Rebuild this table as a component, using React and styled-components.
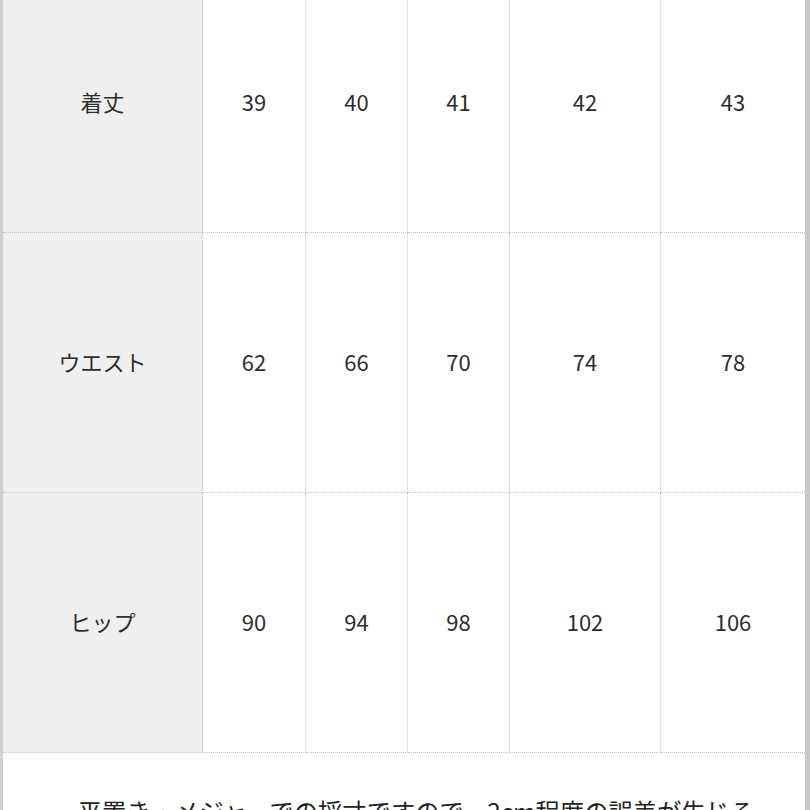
import React from "react";
import styled, { createGlobalStyle } from "styled-components";

const Global = createGlobalStyle`
  html, body { margin: 0; padding: 0; background: #fff; overflow: hidden; }
  body { font-family: "Noto Sans CJK JP", "Noto Sans", sans-serif; color: #333; }
`;

const Frame = styled.div`
  width: 810px;
  height: 810px;
  box-sizing: border-box;
  border-left: 3px solid #d0d0d0;
  border-right: 5px solid #c8c8c8;
  overflow: hidden;
  background: #fff;
`;

const Table = styled.div`
  display: grid;
  grid-template-columns: 200px 103px 102px 102px 151px 1fr;
  grid-auto-rows: 260px;
  margin-top: -27px;
`;

const Cell = styled.div`
  display: flex;
  align-items: center;
  justify-content: center;
  box-sizing: border-box;
  border-bottom: 1px dotted #c4c4c4;
  border-right: ${(p) => (p.$last ? "none" : "1px dotted #c4c4c4")};
  background: ${(p) => (p.$head ? "#efefef" : "#fff")};
  font-size: 22px;
  color: #2e2e2e;
  padding-bottom: 3px;
`;

const Note = styled.p`
  margin: 0;
  padding: 41px 6px 0 30px;
  text-align: center;
  font-size: 24.3px;
  line-height: 1.4;
  color: #222;
`;

const rows = [
  ["着丈", "39", "40", "41", "42", "43"],
  ["ウエスト", "62", "66", "70", "74", "78"],
  ["ヒップ", "90", "94", "98", "102", "106"],
];

export default function App() {
  return (
    <>
      <Global />
      <Frame>
        <Table>
          {rows.map((r) =>
            r.map((v, i) => (
              <Cell key={r[0] + i} $head={i === 0} $last={i === r.length - 1}>
                {v}
              </Cell>
            ))
          )}
        </Table>
        <Note>
          平置き・メジャーでの採寸ですので、2cm程度の誤差が生じる
          <br />
          場合がございます。
        </Note>
      </Frame>
    </>
  );
}
